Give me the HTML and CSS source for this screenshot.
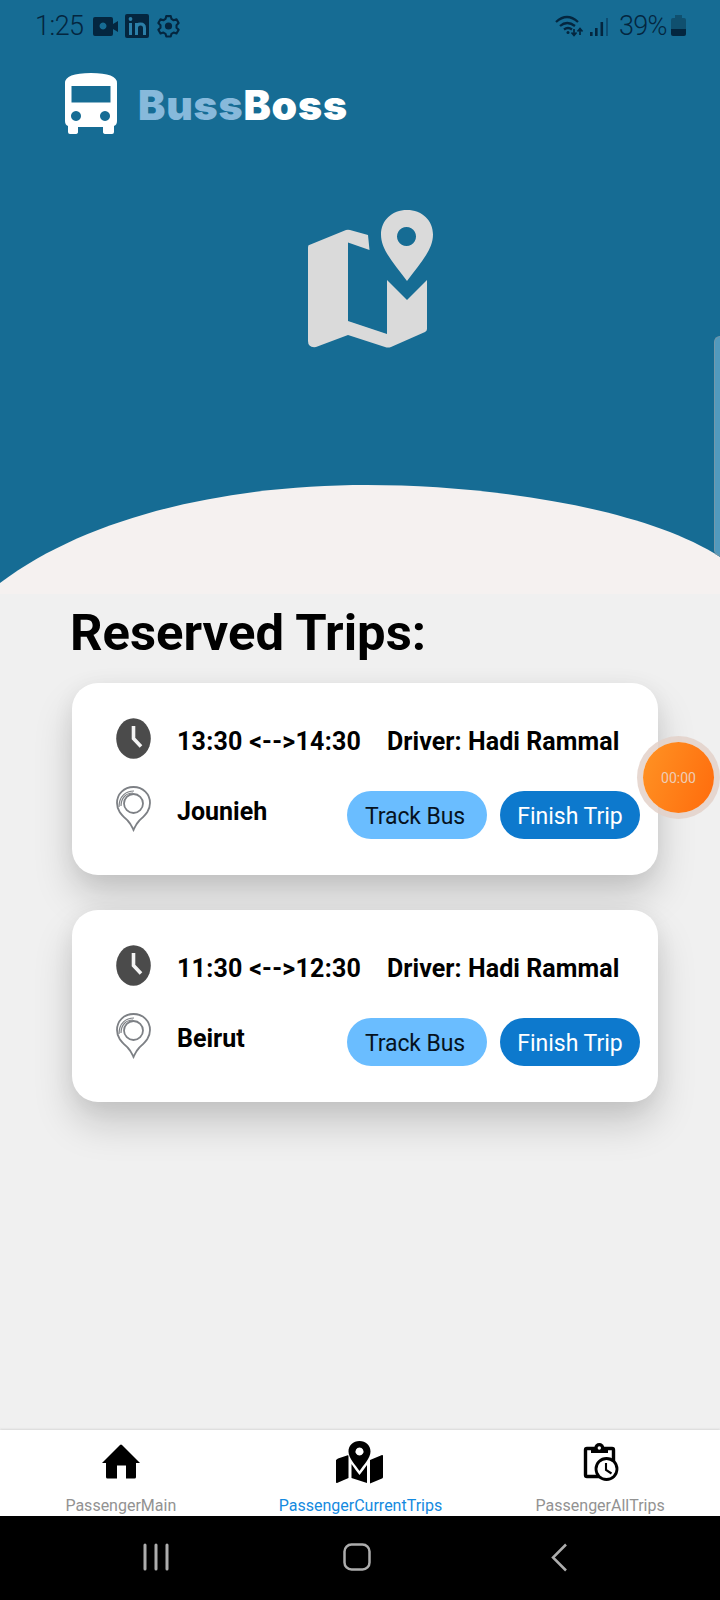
FILE: index.html
```html
<!DOCTYPE html>
<html lang="en">
<head>
<meta charset="utf-8">
<title>BussBoss</title>
<link rel="stylesheet" href="styles.css">
</head>
<body>
<div class="phone">
  <header class="hero">
    <div class="status">
      <span class="time">1:25</span>
      <svg class="status-left" width="90" height="26" viewBox="92 13 90 26">
        <path fill="#04263f" fill-rule="evenodd" d="M95 17h16q2 0 2 2v5l5-3v11l-5-3v5q0 2-2 2H95q-2 0-2-2V19q0-2 2-2zM103 22.500a3.500 3.500 0 1 0 .01 0z"/>
        <rect x="125" y="14" width="24" height="24" rx="2" fill="#04263f"/>
        <g fill="none" stroke="#2b7fa8" stroke-width="3"><path d="M130.500 23v12M136.500 35V23M136.500 28q0-4 4-4t4 4v7"/></g>
        <circle cx="130.500" cy="19" r="1.900" fill="#2b7fa8"/>
        <path fill="none" stroke="#04263f" stroke-width="2.300" stroke-linejoin="round" d="M166 16h5l.8 3.200 2.400 1.400 3.200-1 2.400 4.200-2.400 2.300v2.800l2.400 2.300-2.400 4-3.200-.9-2.400 1.400-.8 3h-5l-.8-3-2.400-1.400-3.200.9-2.400-4 2.400-2.300v-2.800l-2.400-2.300 2.400-4.200 3.200 1 2.400-1.400z" transform="translate(168.500 26) scale(.9) translate(-168.500 -27)"/>
        <circle cx="168.500" cy="26" r="3.600" fill="#04263f"/>
      </svg>
      <svg class="status-right" width="56" height="26" viewBox="556 12 56 26">
        <g fill="none" stroke="#04263f" stroke-width="2.300"><path d="M557 21q11-10 22 0M561 25q7-6 15 0M565 28.500q4-3 8 0"/></g>
        <circle cx="569" cy="31.500" r="1.500" fill="#04263f"/>
        <path fill="none" stroke="#04263f" stroke-width="1.700" d="M575 28v6m-2.500-2.500 2.500 3 2.500-3M581 34v-6m-2.500 2.500 2.500-3 2.500 3"/>
        <path stroke="#04263f" stroke-width="2.600" d="M592.300 35v-4M597.300 35v-8M602.800 35V21"/><path stroke="#0d4d72" stroke-width="2" d="M608 35V17"/>
      </svg>
      <span class="percent">39%</span>
      <svg class="battery" width="16" height="24" viewBox="670 14 16 24"><path fill="#10506f" d="M675 15h7v3h2q2 0 2 2v9h-15v-9q0-2 2-2h2z"/><path fill="#04263f" d="M671 29h15v5q0 2-2 2h-11q-2 0-2-2z"/></svg>
    </div>
    <div class="brand">
      <svg width="54" height="64" viewBox="64 72 54 64"><path fill="#fff" fill-rule="evenodd" d="M65 83Q65 73 91 73t26 10v38q0 4-3 5v6q0 2-2 2h-6q-3 0-3-2v-5H78v5q0 2-3 2h-5q-2 0-2-2v-6q-3-1-3-5zM71.500 86v16.500h39V86zM76 111a5 5 0 1 0 .01 0zM105 111a5 5 0 1 0 .01 0z"/></svg>
      <h2 class="wordmark"><span class="wordmark-soft">Buss</span>Boss</h2>
    </div>
    <svg class="hero-map" width="128" height="142" viewBox="307 208 128 142">
      <path fill="#dadada" d="M308 245.500 346 230q2-.7 4 0l18 5 1.500 15L348 242.500V321l39 13V280l20 20 20-20v49q0 2-2 3l-34 15q-3 1-6 0l-37-12-32 12q-8 1-8-6V248q0-2 .5-2.500z"/>
      <path fill="#dadada" fill-rule="evenodd" d="M407 210c15 0 26 10.500 26 24.500 0 16-14 30-26 46.500-12-16.500-26-30.500-26-46.500 0-14 11-24.500 26-24.500zM406.500 227a9.500 9.500 0 1 0 .01 0z"/>
    </svg>
    <svg class="wave" width="720" height="110" viewBox="0 484 720 110"><path fill="#f5f1f0" d="M0 583C90 515 230 485 367 485C490 485 645 508 720 557V594H0z"/></svg>
    <div class="edge-handle"></div>
  </header>

  <main class="content">
    <h1 class="title">Reserved Trips:</h1>
    <section class="trips">
      <article class="trip">
        <div class="trip-row">
          <svg class="clock" width="35" height="41" viewBox="0 0 35 41"><ellipse cx="17.500" cy="20.500" rx="17.300" ry="20.300" fill="#4b4b4b"/><path d="M17.500 8v12.500l7.500 8" fill="none" stroke="#f4f4f4" stroke-width="3.600"/></svg>
          <span class="hours">13:30 &lt;--&gt;14:30</span>
          <span class="driver">Driver: Hadi Rammal</span>
        </div>
        <div class="trip-row trip-place">
          <svg class="pin" width="35" height="46" viewBox="0 0 35 46"><g fill="none" stroke="#7d8085" stroke-width="1.800"><path d="M17.500 1C8 1 1 8 1 17c0 8 5 12 11 18 3 3 4 6 5.500 9 1.500-3 2.500-6 5.500-9 6-6 11-10 11-18C34 8 27 1 17.500 1z"/><circle cx="17.500" cy="17.500" r="9.500"/><path stroke-width="1.200" d="M3 21C3 10 10 5 18 5M5 20C5 12 10 7 17 7"/></g></svg>
          <span class="place">Jounieh</span>
          <div class="actions"><button class="btn btn-track">Track Bus</button><button class="btn btn-finish">Finish Trip</button></div>
        </div>
      </article>
      <article class="trip">
        <div class="trip-row">
          <svg class="clock" width="35" height="41" viewBox="0 0 35 41"><ellipse cx="17.500" cy="20.500" rx="17.300" ry="20.300" fill="#4b4b4b"/><path d="M17.500 8v12.500l7.500 8" fill="none" stroke="#f4f4f4" stroke-width="3.600"/></svg>
          <span class="hours">11:30 &lt;--&gt;12:30</span>
          <span class="driver">Driver: Hadi Rammal</span>
        </div>
        <div class="trip-row trip-place">
          <svg class="pin" width="35" height="46" viewBox="0 0 35 46"><g fill="none" stroke="#7d8085" stroke-width="1.800"><path d="M17.500 1C8 1 1 8 1 17c0 8 5 12 11 18 3 3 4 6 5.500 9 1.500-3 2.500-6 5.500-9 6-6 11-10 11-18C34 8 27 1 17.500 1z"/><circle cx="17.500" cy="17.500" r="9.500"/><path stroke-width="1.200" d="M3 21C3 10 10 5 18 5M5 20C5 12 10 7 17 7"/></g></svg>
          <span class="place">Beirut</span>
          <div class="actions"><button class="btn btn-track">Track Bus</button><button class="btn btn-finish">Finish Trip</button></div>
        </div>
      </article>
    </section>
    <div class="recorder">00:00</div>
  </main>

  <nav class="tabs">
    <a class="tab">
      <svg width="52" height="46" viewBox="0 0 52 46"><path d="M25 5q1-1 2 0l18 18h-4v14q0 1.500-1.500 1.500H31V25.500h-9v13h-9.500q-1.500 0-1.500-1.500V23H7z"/></svg>
      <span>PassengerMain</span>
    </a>
    <a class="tab tab-active">
      <svg width="52" height="46" viewBox="335 1440 52 46"><path fill="#000" d="m349.500 1455 0 23-11.500 5q-1 .3-1-1v-22l2-1.500zM352.500 1464q4 6 8 11 4-5 7.500-10v18l-15.500-5zM371 1460l12-5q1-.3 1 1v21q0 1-1 1.500l-12 5z"/><path fill="#000" stroke="#fff" stroke-width="2" paint-order="stroke" fill-rule="evenodd" d="M360.500 1441c6.300 0 11 4.600 11 10.500 0 6.500-7 13.500-11 19.500-4-6-11-13-11-19.500 0-5.900 4.700-10.500 11-10.500zM360.500 1447.500a4 4 0 1 0 .01 0z"/></svg>
      <span>PassengerCurrentTrips</span>
    </a>
    <a class="tab">
      <svg width="52" height="46" viewBox="575 1440 52 46"><rect x="586.500" y="1448.500" width="28" height="28" rx="1.500" fill="none" stroke="#000" stroke-width="3.400"/><path d="M592 1447h17v6h-17z"/><circle cx="600.300" cy="1448" r="5"/><circle cx="600.300" cy="1448" r="1.700" fill="#fff"/><circle cx="607.500" cy="1469" r="10.500" fill="#fff" stroke="#000" stroke-width="2.800"/><path fill="none" stroke="#000" stroke-width="2.100" d="M607 1463v7l5.500 3.500"/></svg>
      <span>PassengerAllTrips</span>
    </a>
  </nav>
  <footer class="system-nav">
    <svg width="26" height="28" viewBox="0 0 26 28"><path d="M2 2v24M13 2v24M24 2v24" stroke="#adadad" stroke-width="3" stroke-linecap="round"/></svg>
    <svg width="28" height="28" viewBox="0 0 28 28"><rect x="1.500" y="1.500" width="25" height="25" rx="7" fill="none" stroke="#adadad" stroke-width="2.500"/></svg>
    <svg width="17" height="29" viewBox="0 0 17 29"><path d="M15 1.500 2 14.500l13 13" fill="none" stroke="#adadad" stroke-width="2.500"/></svg>
  </footer>
</div>
</body>
</html>
```

FILE: styles.css
```css
* { box-sizing: border-box; }
body { margin: 0; font-family: Roboto, "Liberation Sans", sans-serif; }
.phone { width: 720px; height: 1600px; display: flex; flex-direction: column; background: #f0f0f0; overflow: hidden; position: relative; }
.hero { height: 594px; background: #166c94; display: flex; flex-direction: column; position: relative; flex: none; }
.status { height: 52px; padding: 0 34px 0 35px; display: flex; align-items: center; color: #04263f; font-size: 27px; font-weight: 300; }
.time { width: 57px; letter-spacing: -.5px; }
.status-right { margin-left: auto; }
.percent { margin-left: 8px; width: 50px; letter-spacing: -.7px; }
.battery { margin-left: 1px; }
.brand { display: flex; margin: 20px 0 0 64px; height: 64px; }
.wordmark { margin: 0 0 0 20px; font: 900 41px/66px Inter, sans-serif; letter-spacing: .8px; color: #fff; }
.wordmark-soft { color: #87b9db; }
.hero-map { margin: 72px 0 0 307px; }
.wave { margin-top: auto; display: block; }
.edge-handle { position: absolute; right: 0; top: 336px; width: 6px; height: 220px; border: 1px solid #7598aa; border-right: 0; border-radius: 6px 0 0 6px; background: #5299bd; }
.content { flex: 1; position: relative; padding: 9px 62px 0 72px; }
.title { margin: 0 0 0 -2px; font-size: 50.800px; line-height: 59px; font-weight: 700; white-space: nowrap; }
.trips { display: flex; flex-direction: column; gap: 35px; margin-top: 21px; }
.trip { height: 192px; border-radius: 26px; background: #fff; padding: 35px 18px 0 44px; box-shadow: 0 22px 38px rgba(0,0,0,.17), 0 4px 22px rgba(0,0,0,.06); }
.trip-row { display: flex; height: 41px; align-items: center; font-size: 25px; font-weight: 700; white-space: nowrap; }
.clock, .pin { flex: none; margin-right: 26px; }
.hours { width: 210px; padding-top: 6px; letter-spacing: .25px; }
.driver { padding-top: 5px; letter-spacing: .07px; }
.trip-place { margin-top: 27px; height: 53px; align-items: flex-start; }
.place { line-height: 51px; }
.actions { display: flex; gap: 13px; margin: 5px 0 0 auto; }
.btn { width: 140px; height: 48px; border: 0; border-radius: 24px; padding: 3px 0 0; font: 400 23px/28px Roboto, sans-serif; }
.btn-track { background: #6abdff; color: #06121e; padding-right: 4px; letter-spacing: -.12px; }
.btn-finish { background: #0d79cd; color: #fff; }
.recorder { position: absolute; left: 643px; top: 148px; width: 71px; height: 71px; border-radius: 50%; background: linear-gradient(110deg, #ff9324, #ff6b0c); box-shadow: 0 0 0 6px rgba(227,209,201,.85); color: #eecdb5; font-size: 14px; line-height: 72px; text-align: center; }
.tabs { height: 86px; flex: none; background: #fff; display: grid; grid-template-columns: repeat(3, 1fr); box-shadow: 0 -1px 2px #d8d8d8; padding-left: 1px; }
.tab { display: flex; flex-direction: column; align-items: center; padding-top: 10px; color: #929292; font-size: 16px; }
.tab span { line-height: 20px; margin-top: 10px; }
.tab-active { color: #148ae0; }
.system-nav { height: 84px; flex: none; background: #000; display: grid; grid-template-columns: 26px 28px 17px; justify-content: start; align-items: start; padding: 27px 0 0 143px; column-gap: 174px; }
.system-nav svg:last-child { margin-left: 6px; }
```
